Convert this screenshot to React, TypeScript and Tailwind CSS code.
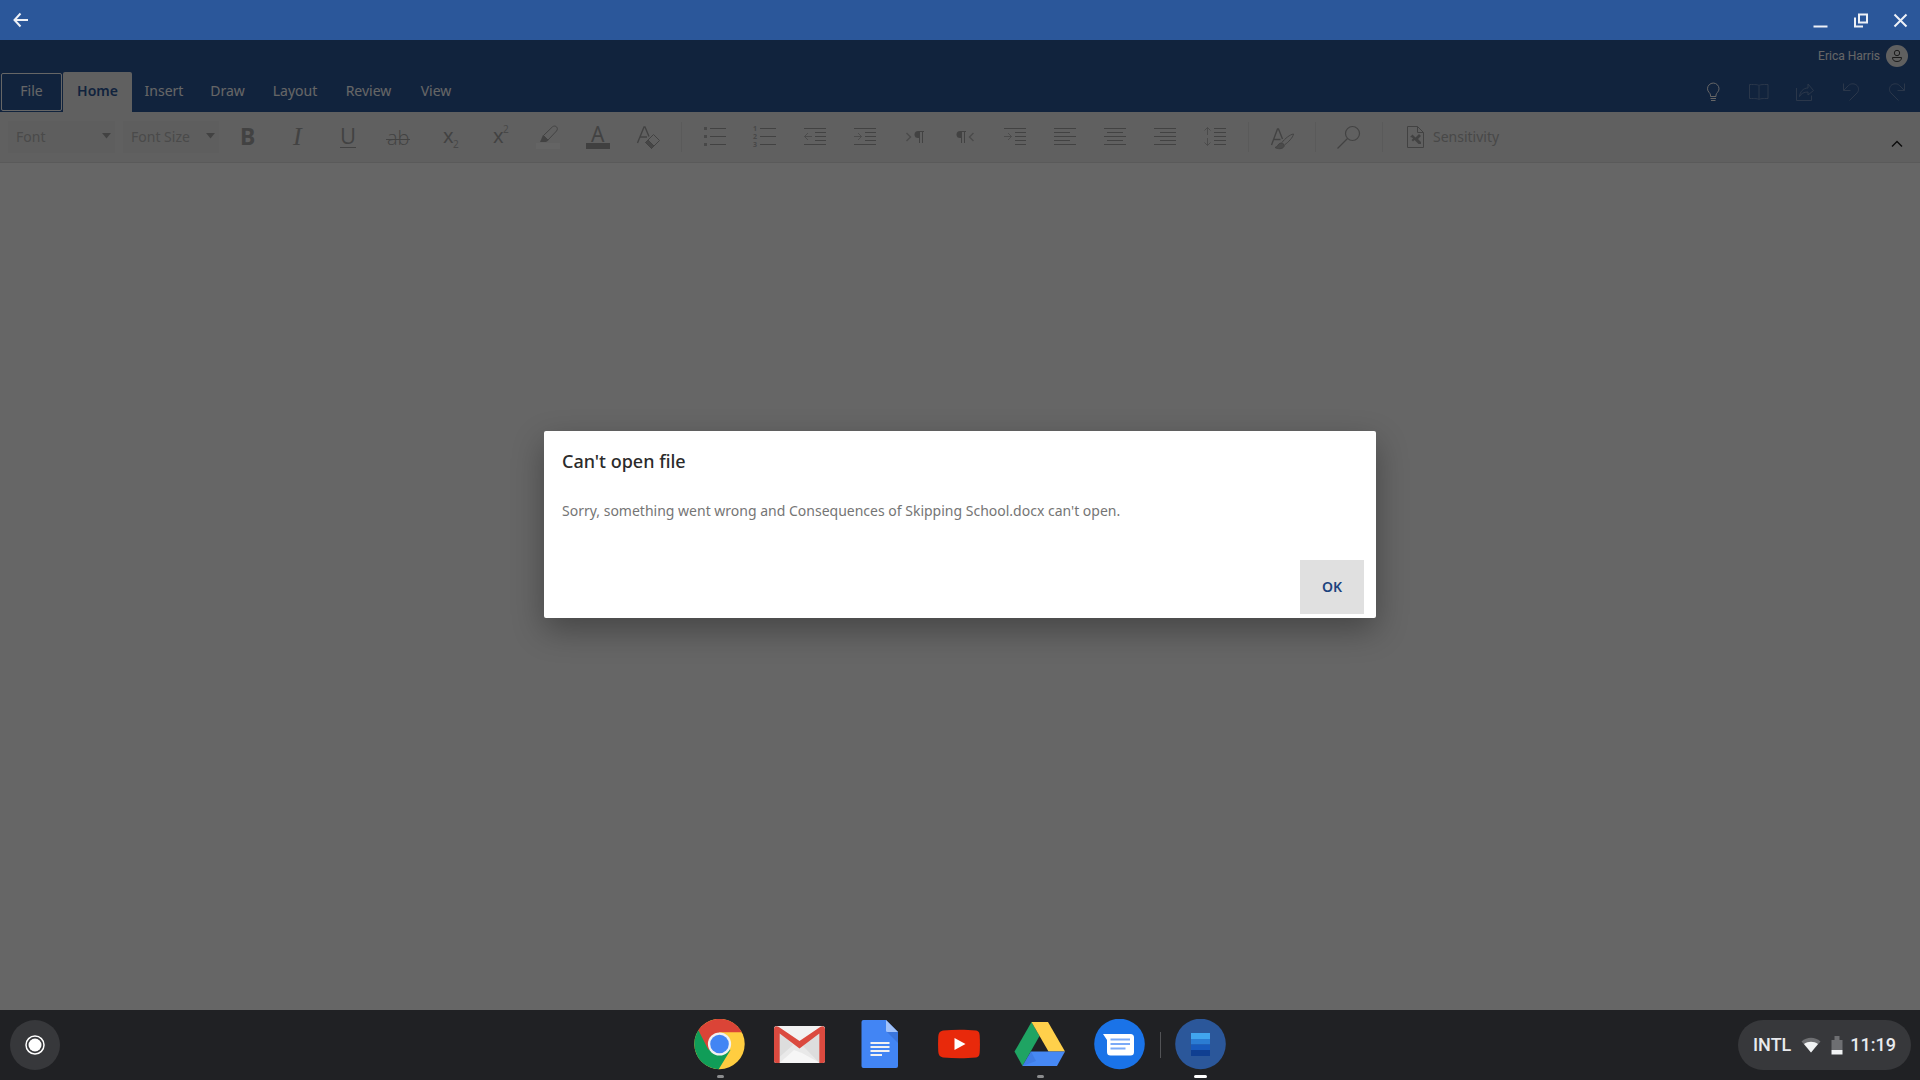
import type { ReactNode } from "react";

const LINES = "stroke-[#a6a6a6]";

function Tool({ label, children }: { label: string; children: ReactNode }) {
  return (
    <button type="button" aria-label={label} className="shrink-0">
      <svg width="50" height="50" viewBox="0 0 50 50" fill="none" stroke="none" aria-hidden="true">
        {children}
      </svg>
    </button>
  );
}

function Separator() {
  return <div className="mx-2 h-[30px] w-px shrink-0 bg-[#e2e2e2]" />;
}

function Rules({ rows }: { rows: [number, number, number][] }) {
  return (
    <g className={LINES}>
      {rows.map(([y, x1, x2]) => (
        <path key={y} d={`M${x1} ${y}H${x2}`} />
      ))}
    </g>
  );
}

const ARROW_RIGHT = "M14 24.5H21.5M18 21L21.5 24.5L18 28";
const ARROW_LEFT = "M22 24.5H14.5M18 21L14.5 24.5L18 28";
const PILCROW = "M4 0.5H10M5.5 0V12M8.5 0V12";

function Pilcrow({ x }: { x: number }) {
  return (
    <g transform={`translate(${x} 19)`}>
      <path d="M5.5 0H4A3.5 3.5 0 0 0 4 7H5.5Z" fill="#a6a6a6" />
      <path d={PILCROW} stroke="#a6a6a6" />
    </g>
  );
}

function DropDown({ label, width }: { label: string; width: string }) {
  return (
    <div className={`relative h-8 shrink-0 ${width}`}>
      <select aria-label={label} className="h-full w-full appearance-none bg-[#ebebeb] pl-2 text-sm text-[#b8b8b8]">
        <option>{label}</option>
      </select>
      <svg className="pointer-events-none absolute top-3 right-1" width="9" height="6" viewBox="0 0 9 6" aria-hidden="true">
        <path d="M0 0H9L4.5 5.5Z" fill="#a6a6a6" />
      </svg>
    </div>
  );
}

function HeaderIcon({ label, dim, children }: { label: string; dim?: boolean; children: ReactNode }) {
  return (
    <button type="button" aria-label={label} className={`flex h-10 w-[46px] items-center justify-center ${dim ? "opacity-30" : ""}`}>
      <svg width="20" height="20" viewBox="0 0 20 20" fill="none" stroke="#fff" aria-hidden="true">
        {children}
      </svg>
    </button>
  );
}

function WindowButton({ label, children }: { label: string; children: ReactNode }) {
  return (
    <button type="button" aria-label={label} className="flex size-10 items-center justify-center">
      <svg width="18" height="18" viewBox="0 0 18 18" fill="none" stroke="#eef1f7" strokeWidth="2" aria-hidden="true">
        {children}
      </svg>
    </button>
  );
}

function TitleBar() {
  return (
    <header className="flex h-10 items-center bg-[#2b579a]">
      <WindowButton label="Back">
        <path d="M17 9H4M9.5 2.5L3.5 9L9.5 15.5" />
      </WindowButton>
      <div className="ml-auto flex">
        <WindowButton label="Minimize">
          <path d="M2.5 15.5H16.5" />
        </WindowButton>
        <WindowButton label="Restore">
          <path d="M8 3.5H16V11.5H8ZM4 6.5V15.5H12" />
        </WindowButton>
        <WindowButton label="Close">
          <path d="M3.5 3.5L15.5 15.5M15.5 3.5L3.5 15.5" />
        </WindowButton>
      </div>
    </header>
  );
}

const TABS = [
  { name: "Insert", width: "w-16" },
  { name: "Draw", width: "w-[63px]" },
  { name: "Layout", width: "w-[72px]" },
  { name: "Review", width: "w-[75px]" },
  { name: "View", width: "w-[60px]" },
];

function RibbonHeader() {
  return (
    <div className="bg-[#2b579a] text-white">
      <div className="flex h-8 items-center justify-end gap-1.5 pr-3 font-[Roboto,sans-serif] text-xs">
        <span>Erica Harris</span>
        <svg width="22" height="22" viewBox="0 0 22 22" fill="none" aria-hidden="true">
          <circle cx="11" cy="11" r="11" fill="#f0f0f0" />
          <g stroke="#444">
            <circle cx="11" cy="8" r="2.7" />
            <path d="M6.5 12.5H15.5C15.5 15 14 16.5 11 16.5S6.5 15 6.5 12.5Z" />
          </g>
        </svg>
      </div>
      <div className="flex h-10 items-end justify-between">
        <nav className="flex h-full text-sm" aria-label="Ribbon tabs">
          <button type="button" className="mx-px mt-px mb-px w-[61px] rounded-xs border border-white pb-0.5">File</button>
          <button type="button" className="w-[69px] rounded-t-xs bg-[#f0f0f0] pb-0.5 font-semibold text-[#2b579a]">Home</button>
          {TABS.map((t) => (
            <button key={t.name} type="button" className={`pb-0.5 ${t.width}`}>{t.name}</button>
          ))}
        </nav>
        <div className="flex">
          <HeaderIcon label="Tell me">
            <path d="M7.5 14.5V13C7.5 11 4.5 10 4.5 6.8A5.5 5.5 0 0 1 16 6.8C16 10 13 11 13 13V14.5ZM7.5 16.5H13M8 18.5H12.5" />
          </HeaderIcon>
          <HeaderIcon label="Mobile view" dim>
            <path d="M10 3.5C8.500 2.5 6.500 2.5 0.5 2.5V16.5C6.500 16.5 8.500 16.5 10 17.5C11.500 16.5 13.500 16.5 19 16.5V2.5C13.500 2.5 11.500 2.5 10 3.5ZM10 3.5V17.5" />
          </HeaderIcon>
          <HeaderIcon label="Share" dim>
            <path d="M1.5 6V18.5H16.5V13.5M4.5 14.5C5 10 8 6 13 6V2L18.5 8.5L13 13V10C9 10 6 11.5 4.5 14.5Z" />
          </HeaderIcon>
          <HeaderIcon label="Undo" dim>
            <path d="M2.5 1.5V8.5H9.5M2.5 8.5L7.5 3.5C10 1 14 1.5 16 3.5S18 9 16 11L8.5 18.5" />
          </HeaderIcon>
          <HeaderIcon label="Redo" dim>
            <path d="M17.5 1.5V8.5H10.5M17.5 8.5L12.5 3.5C10 1 6 1.5 4 3.5S2 9 4 11L11.5 18.5" />
          </HeaderIcon>
        </div>
      </div>
    </div>
  );
}

function Toolbar() {
  return (
    <div role="toolbar" aria-label="Home" className="flex h-[51px] items-center border-b border-[#e0e0e0] bg-[#f0f0f0] pl-2">
      <DropDown label="Font" width="w-[107px]" />
      <div className="w-2" />
      <DropDown label="Font Size" width="w-24" />
      <div className="w-1" />
      <Tool label="Bold">
        <text x="17" y="33" fontSize="23" fontWeight="700" fill="#a6a6a6">B</text>
      </Tool>
      <Tool label="Italic">
        <text x="20" y="33" fontSize="26" fontStyle="italic" fontFamily="Liberation Serif, serif" fill="#a6a6a6">I</text>
      </Tool>
      <Tool label="Underline">
        <text x="17" y="32" fontSize="22" fontFamily="Open Sans, sans-serif" fill="#a6a6a6">U</text>
        <path d="M17 35.5H33" className={LINES} />
      </Tool>
      <Tool label="Strikethrough">
        <text x="14" y="33" fontSize="20" fontWeight="300" fontFamily="Open Sans, sans-serif" fill="#a6a6a6">ab</text>
        <path d="M13 27.5H37" className={LINES} />
      </Tool>
      <Tool label="Subscript">
        <text x="20" y="31" fontSize="20" fill="#a6a6a6">x</text>
        <text x="30" y="36" fontSize="10" fill="#b4b4b4">2</text>
      </Tool>
      <Tool label="Superscript">
        <text x="20" y="31" fontSize="20" fill="#a6a6a6">x</text>
        <text x="30" y="21" fontSize="10" fill="#b4b4b4">2</text>
      </Tool>
      <Tool label="Highlight">
        <path d="M13 31H37V37H13Z" fill="#f9f9f9" />
        <path d="M17 30L20 23L25.5 28.5L23 30Z" fill="#a6a6a6" />
        <path d="M20.5 23.5L29.5 14.8C32.5 12.5 36 16 33.5 19L25 28Z" className={LINES} />
      </Tool>
      <Tool label="Font color">
        <text x="18" y="30" fontSize="21" fill="#a6a6a6">A</text>
        <path d="M13 31H37V37H13Z" fill="#a0a0a0" />
      </Tool>
      <Tool label="Clear formatting">
        <path d="M14.5 31L21 15H22L26 24.5M17 25H24" className={LINES} strokeWidth="1.4" />
        <path d="M30.5 22.5L36.5 28.5L28.5 36.5L22.5 30.5Z" className={LINES} />
        <path d="M25 28L31 34L28.5 36.5L22.5 30.5Z" fill="#b0b0b0" className={LINES} />
      </Tool>
      <Separator />
      <Tool label="Bullets">
        <path d="M14 15H17V18H14ZM14 23H17V26H14ZM14 31H17V34H14Z" fill="#b4b4b4" />
        <Rules rows={[[16.5, 20, 36], [24.5, 20, 36], [32.5, 20, 36]]} />
      </Tool>
      <Tool label="Numbering">
        <g fontSize="7" fontWeight="700" fill="#b4b4b4">
          <text x="13" y="19">1</text>
          <text x="13" y="27">2</text>
          <text x="13" y="35">3</text>
        </g>
        <Rules rows={[[16.5, 20, 36], [24.5, 20, 36], [32.5, 20, 36]]} />
      </Tool>
      <Tool label="Decrease indent">
        <path d={ARROW_LEFT} stroke="#bbb" />
        <Rules rows={[[16.5, 14, 36], [20.5, 25, 36], [24.5, 25, 36], [28.5, 25, 36], [32.5, 14, 36]]} />
      </Tool>
      <Tool label="Increase indent">
        <path d={ARROW_RIGHT} stroke="#bbb" />
        <Rules rows={[[16.5, 14, 36], [20.5, 25, 36], [24.5, 25, 36], [28.5, 25, 36], [32.5, 14, 36]]} />
      </Tool>
      <Tool label="Left to right">
        <path d="M16.5 21L20.5 25L16.5 29" stroke="#bbb" strokeWidth="1.5" />
        <Pilcrow x={24} />
      </Tool>
      <Tool label="Right to left">
        <path d="M33.5 21L29.5 25L33.5 29" stroke="#bbb" strokeWidth="1.5" />
        <Pilcrow x={16} />
      </Tool>
      <Tool label="Special indent">
        <path d={ARROW_RIGHT} stroke="#bbb" />
        <Rules rows={[[16.5, 14, 36], [20.5, 25, 36], [24.5, 25, 36], [28.5, 25, 36], [32.5, 25, 36]]} />
      </Tool>
      <Tool label="Align left">
        <Rules rows={[[16.5, 14, 36], [20.5, 14, 30], [24.5, 14, 36], [28.5, 14, 30], [32.5, 14, 36]]} />
      </Tool>
      <Tool label="Center">
        <Rules rows={[[16.5, 14, 36], [20.5, 17, 33], [24.5, 14, 36], [28.5, 17, 33], [32.5, 14, 36]]} />
      </Tool>
      <Tool label="Align right">
        <Rules rows={[[16.5, 14, 36], [20.5, 20, 36], [24.5, 14, 36], [28.5, 20, 36], [32.5, 14, 36]]} />
      </Tool>
      <Tool label="Line spacing">
        <path d="M17.5 23V15.5M14.5 18.5L17.5 15.5L20.5 18.5M17.5 26V33.5M14.5 30.5L17.5 33.5L20.5 30.5" stroke="#bbb" />
        <Rules rows={[[16.5, 24, 36], [20.5, 24, 36], [24.5, 24, 36], [28.5, 24, 36], [32.5, 24, 36]]} />
      </Tool>
      <Separator />
      <Tool label="Styles">
        <path d="M14.5 33L20.5 17H21.5L25.5 27M17 27.5H23.5" className={LINES} strokeWidth="1.4" />
        <path d="M18 35.5C20.5 35.5 21 31 24 31C26 31 28 32.5 27 34.5C25.5 37.5 20.5 37 18 35.5Z" fill="#b8b8b8" className={LINES} />
        <path d="M25 30.5C28 26.5 33 22.5 36.5 22C36 25.5 31 30.5 28 32.5" className={LINES} />
      </Tool>
      <Separator />
      <Tool label="Find">
        <circle cx="28.5" cy="21.5" r="7" className={LINES} strokeWidth="1.2" />
        <path d="M23.5 26.5L13.5 36.5" className={LINES} strokeWidth="1.2" />
      </Tool>
      <Separator />
      <button type="button" className="flex items-center gap-2 pl-4 text-sm text-[#b4b4b4]">
        <svg width="18" height="22" viewBox="0 0 18 22" fill="none" aria-hidden="true">
          <path d="M0.5 0.5H10.5L16.5 6.5V21.5H0.5ZM10.5 0.5V6.5H16.5" className={LINES} />
          <path d="M3 11L5.5 8.500L8.500 11.500L12 8L14 10L11 13L14 16V18H11.500L7.500 14L6 15.500L4.500 14L6 12.500L5 11.500Z" fill="#a6a6a6" />
        </svg>
        Sensitivity
      </button>
      <button type="button" aria-label="Collapse ribbon" className="ml-auto flex h-[50px] w-[46px] items-end justify-center pb-3">
        <svg width="12" height="12" viewBox="0 0 12 12" fill="none" aria-hidden="true">
          <path d="M1 8.5L6 3.5L11 8.5" stroke="#222" strokeWidth="1.5" />
        </svg>
      </button>
    </div>
  );
}

function Dialog() {
  return (
    <div className="absolute inset-0 flex items-center justify-center bg-black/60 pb-px">
      <div
        role="alertdialog"
        aria-labelledby="dialog-title"
        aria-describedby="dialog-text"
        className="w-[832px] max-w-full rounded-xs bg-white shadow-[0_12px_32px_rgba(0,0,0,0.32)]"
      >
        <h1 id="dialog-title" className="px-[18px] pt-[18px] text-lg leading-6 font-medium text-[#2b2b2b]">Can't open file</h1>
        <p id="dialog-text" className="px-[18px] pt-[26px] pb-[37px] text-sm leading-6 text-[#757575]">
          Sorry, something went wrong and Consequences of Skipping School.docx can't open.
        </p>
        <div className="flex justify-end pr-3 pb-1">
          <button type="button" className="h-[54px] w-16 bg-[#e0e0e0] text-sm font-semibold text-[#1c437e]">OK</button>
        </div>
      </div>
    </div>
  );
}

function ShelfApp({ label, width = "w-20", mark, children }: { label: string; width?: string; mark?: string; children: ReactNode }) {
  return (
    <button type="button" aria-label={label} className={`relative flex h-[70px] items-center justify-center ${width}`}>
      <svg width="52" height="52" viewBox="0 0 52 52" aria-hidden="true">
        {children}
      </svg>
      {mark && <span className={`absolute bottom-0.5 h-[3px] rounded-full ${mark}`} />}
    </button>
  );
}

function Shelf() {
  return (
    <footer className="grid h-[70px] grid-cols-[1fr_auto_1fr] items-center bg-[#202124]">
      <button type="button" aria-label="Launcher" className="ml-2.5 flex size-[50px] items-center justify-center rounded-full bg-[#37383b]">
        <svg width="20" height="20" viewBox="0 0 20 20" aria-hidden="true">
          <circle cx="10" cy="10" r="9" fill="none" stroke="#fff" strokeWidth="1.5" />
          <circle cx="10" cy="10" r="6.5" fill="#fff" />
        </svg>
      </button>
      <div className="flex items-center">
        <ShelfApp label="Chrome" mark="w-[7px] bg-[#8b8c8e]">
          <circle cx="25.5" cy="25" r="25.2" fill="#ffcd40" />
          <path d="M4.4 11.3A25.2 25.2 0 0 0 24.7 50.2L36.5 31L25.5 25Z" fill="#109d58" />
          <path d="M4.4 11.3A25.2 25.2 0 0 1 47.8 13.3H25.5L14.5 31Z" fill="#db4437" />
          <circle cx="25.5" cy="25" r="11.6" fill="#f1f1f1" />
          <circle cx="25.5" cy="25" r="9.3" fill="#4285f4" />
        </ShelfApp>
        <ShelfApp label="Gmail">
          <rect x="0" y="7" width="51" height="37" rx="2.5" fill="#e9e9e9" />
          <path d="M5.5 44L20 31L28 34L46 44Z" fill="#f6f6f6" />
          <path d="M5.5 12V38L19 26ZM45.5 12V44L29 27Z" fill="#d6d6d6" opacity=".6" />
          <path d="M2 7H49L25.5 24Z" fill="#f2f2f2" />
          <path d="M0 10V41.5A2.5 2.5 0 0 0 2.5 44H5.7V14.5L25.5 29.5L45.3 14.5V44H48.5A2.5 2.5 0 0 0 51 41.5V10C51 7.5 48.5 6.3 46.5 7.8L25.5 22L4.5 7.8C2.5 6.3 0 7.5 0 10Z" fill="#db4a3f" />
        </ShelfApp>
        <ShelfApp label="Docs">
          <path d="M9.5 1H32L44 13V47A2 2 0 0 1 42 49H9.5A2 2 0 0 1 7.5 47V3A2 2 0 0 1 9.5 1Z" fill="#4285f4" />
          <path d="M32 1L44 13H33.5A1.5 1.5 0 0 1 32 11.5Z" fill="#a1c2fa" />
          <path d="M33 13H44V24Z" fill="#3a75dc" />
          <path d="M16.5 24H35.5M16.5 28H35.5M16.5 32H35.5M16.5 36H28" stroke="#f1f1f1" strokeWidth="2" />
        </ShelfApp>
        <ShelfApp label="YouTube">
          <path d="M9 11.5C20 10.500 32 10.500 42 11.5C45 12 45.5 14 45.7 17C46 22 46 28 45.7 33C45.5 36 45 38 42 38.5C32 39.5 20 39.5 9 38.5C6 38 4.500 36 4.300 33C4 28 4 22 4.300 17C4.500 14 6 12 9 11.5Z" fill="#e8290b" />
          <path d="M20.5 19V31L31.5 25Z" fill="#fff" />
        </ShelfApp>
        <ShelfApp label="Drive" mark="w-[7px] bg-[#8b8c8e]">
          <path d="M17.5 3L25.5 17L8.5 47L0.5 32.5Z" fill="#1fa463" />
          <path d="M17.5 3H34L51 32.5H34.5Z" fill="#ffd04b" />
          <path d="M17 32.5H51L43 47H8.5Z" fill="#4688f4" />
          <path d="M17 32.5L8.5 47L22 42Z" fill="#3a75dc" opacity=".6" />
        </ShelfApp>
        <ShelfApp label="Messages">
          <circle cx="25.5" cy="25" r="25.3" fill="#1a73e8" />
          <path d="M9 15H36.5A3.5 3.5 0 0 1 40 18.5V33A3.5 3.5 0 0 1 36.5 36.5H16.5A3.5 3.5 0 0 1 13 33V21Z" fill="#fff" />
          <path d="M16.5 20.5H36M16.5 25H36M16.5 29.5H31.5" stroke="#7baaf7" strokeWidth="2" />
        </ShelfApp>
        <div className="h-[26px] w-px bg-[#525356]" />
        <ShelfApp label="Word" width="w-[79px]" mark="w-[13px] bg-white">
          <circle cx="25.5" cy="25" r="25.3" fill="#2b579a" />
          <path d="M16 14H35V20H16Z" fill="#41a5ee" />
          <path d="M16 20H35V25.5H16Z" fill="#2b7cd3" />
          <path d="M16 25.5H35V31H16Z" fill="#185abd" />
          <path d="M16 31H35V37H16Z" fill="#103f91" />
        </ShelfApp>
      </div>
      <button type="button" className="mr-[9px] flex h-[50px] items-center justify-self-end rounded-full bg-[#37383b] px-[15px] font-[Roboto,sans-serif] text-lg font-medium text-[#e8eaed]">
        <span>INTL</span>
        <svg className="ml-2.5" width="20" height="16" viewBox="0 0 20 16" aria-hidden="true">
          <path d="M0.5 4.5C6 -0.5 14 -0.5 19.5 4.5L10 15.5Z" fill="#6e6f72" />
          <path d="M3 7C7 4 13 4 17 7L10 15.5Z" fill="#f1f3f4" />
        </svg>
        <svg className="ml-2.5" width="12" height="20" viewBox="0 0 12 20" aria-hidden="true">
          <path d="M3.5 1H8.5V5H11.5V15H0.5V5H3.5Z" fill="#6e6f72" />
          <path d="M0.5 15H11.5V19.5H0.5Z" fill="#f1f3f4" />
        </svg>
        <time className="ml-[7px]">11:19</time>
      </button>
    </footer>
  );
}

export default function App() {
  return (
    <div className="flex min-h-screen flex-col bg-white font-['Noto_Sans',sans-serif]">
      <TitleBar />
      <main className="relative flex flex-1 flex-col">
        <RibbonHeader />
        <Toolbar />
        <Dialog />
      </main>
      <Shelf />
    </div>
  );
}
